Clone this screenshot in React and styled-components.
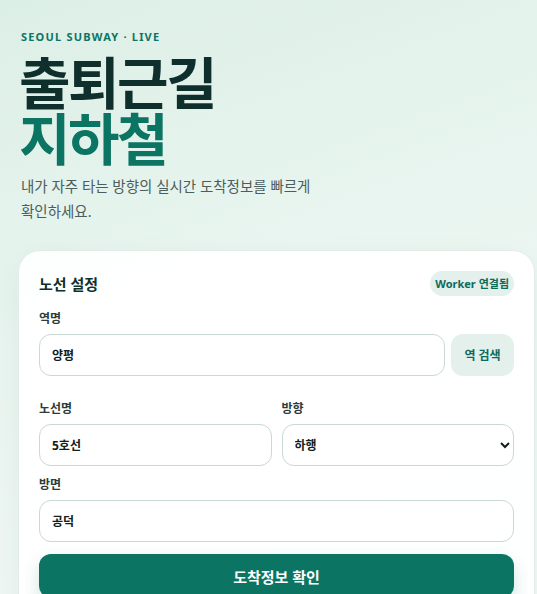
import React, {useState} from 'react';
import styled, {createGlobalStyle} from 'styled-components';

const GlobalStyle = createGlobalStyle`
    * { box-sizing: border-box; }
    html, body {
        margin: 0;
        padding: 0;
    }
    body {
        font-family: "Noto Sans", "Noto Sans CJK KR", sans-serif;
        color: #10302c;
        background: linear-gradient(160deg, #dcefe6 0%, #e9f5f0 45%, #f3f8f6 100%);
        min-height: 100vh;
    }
`;

const Page = styled.main`
    padding: 28px 2px 0 18px;
    overflow: hidden;
    height: 594px;
`;

const Hero = styled.header`
    padding-left: 3px;
    margin-bottom: 26px;
`;

const Eyebrow = styled.div`
    font-size: 11px;
    font-weight: 700;
    letter-spacing: 1.2px;
    color: #0d7463;
    line-height: 18px;
`;

const Title = styled.h1`
    margin: 6px 0 10px -2px;
    font-family: "Noto Sans CJK KR", sans-serif;
    font-size: 56px;
    font-weight: 700;
    line-height: 56px;
    letter-spacing: -2.5px;
    color: #0f2f2c;
    span {
        display: block;
        color: #0b7462;
    }
`;

const Lead = styled.p`
    margin: 0;
    max-width: 320px;
    font-size: 14.5px;
    line-height: 25px;
    color: #4d5d5a;
    word-break: keep-all;
`;

const Card = styled.section`
    background: rgba(255, 255, 255, 0.92);
    border: 1px solid #e2ece8;
    border-radius: 22px;
    padding: 20px 20px 40px;
    box-shadow: 0 10px 30px rgba(20, 70, 60, 0.06);
`;

const CardHead = styled.div`
    display: flex;
    justify-content: space-between;
    align-items: center;
    margin-bottom: 15px;
`;

const CardTitle = styled.h2`
    margin: 0;
    font-size: 15px;
    font-weight: 700;
    color: #10302c;
`;

const Badge = styled.span`
    background: #e3f0ec;
    color: #0d6b5c;
    font-size: 11px;
    font-weight: 700;
    border-radius: 999px;
    padding: 4px 5px;
    line-height: 17px;
`;

const Field = styled.div`
    margin-bottom: ${p => p.$gap || 14}px;
`;

const Label = styled.label`
    display: block;
    font-size: 12px;
    font-weight: 700;
    color: #2c3c3a;
    margin-bottom: 7px;
    line-height: 16px;
`;

const Row = styled.div`
    display: flex;
    gap: 6px;
`;

const Grid = styled.div`
    display: grid;
    grid-template-columns: 1fr 1fr;
    gap: 10px;
    margin-bottom: 11px;
`;

const Input = styled.input`
    display: block;
    flex: 1;
    width: 100%;
    height: 42px;
    border: 1px solid #c9d9d5;
    border-radius: 12px;
    background: #fff;
    padding: 0 12px;
    font-family: inherit;
    font-size: 12px;
    font-weight: 700;
    color: #10201e;
    outline: none;
`;

const Select = styled.select`
    display: block;
    width: 100%;
    height: 42px;
    border: 1px solid #c9d9d5;
    border-radius: 12px;
    background: #fff;
    padding: 0 8px;
    font-family: inherit;
    font-size: 12px;
    font-weight: 700;
    color: #10201e;
    outline: none;
`;

const GhostButton = styled.button`
    flex: none;
    width: 63px;
    height: 42px;
    border: none;
    border-radius: 12px;
    background: #e4f0ec;
    color: #0d6b5c;
    font-family: inherit;
    font-size: 12px;
    font-weight: 700;
    cursor: pointer;
`;

const PrimaryButton = styled.button`
    width: 100%;
    height: 44px;
    border: none;
    border-radius: 12px;
    background: #0b7462;
    color: #fff;
    font-family: inherit;
    font-size: 15px;
    font-weight: 700;
    cursor: pointer;
    box-shadow: 0 8px 18px rgba(11, 116, 98, 0.18);
`;

export default function App(){
    const [station, setStation] = useState('양평');
    const [line, setLine] = useState('5호선');
    const [direction, setDirection] = useState('하행');
    const [bound, setBound] = useState('공덕');

    return(
        <>
            <GlobalStyle/>
            <Page>
                <Hero>
                    <Eyebrow>SEOUL SUBWAY · LIVE</Eyebrow>
                    <Title>출퇴근길<span>지하철</span></Title>
                    <Lead>내가 자주 타는 방향의 실시간 도착정보를 빠르게 확인하세요.</Lead>
                </Hero>
                <Card>
                    <CardHead>
                        <CardTitle>노선 설정</CardTitle>
                        <Badge>Worker 연결됨</Badge>
                    </CardHead>
                    <Field $gap={25}>
                        <Label>역명</Label>
                        <Row>
                            <Input value={station} onChange={e => setStation(e.target.value)}/>
                            <GhostButton type="button">역 검색</GhostButton>
                        </Row>
                    </Field>
                    <Grid>
                        <div>
                            <Label>노선명</Label>
                            <Input value={line} onChange={e => setLine(e.target.value)}/>
                        </div>
                        <div>
                            <Label>방향</Label>
                            <Select value={direction} onChange={e => setDirection(e.target.value)}>
                                <option>상행</option>
                                <option>하행</option>
                            </Select>
                        </div>
                    </Grid>
                    <Field $gap={12}>
                        <Label>방면</Label>
                        <Input value={bound} onChange={e => setBound(e.target.value)}/>
                    </Field>
                    <PrimaryButton type="button">도착정보 확인</PrimaryButton>
                </Card>
            </Page>
        </>
    );
}
